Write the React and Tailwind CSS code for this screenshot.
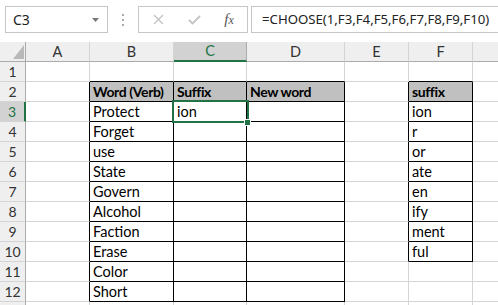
import React from "react";

const widths = [64, 84, 73, 98, 64, 64, 60];
const letters = ["A", "B", "C", "D", "E", "F", "G"];

const data = {
  "1-2": "Word (Verb)",
  "2-2": "Suffix",
  "3-2": "New word",
  "5-2": "suffix",
  "1-3": "Protect",
  "1-4": "Forget",
  "1-5": "use",
  "1-6": "State",
  "1-7": "Govern",
  "1-8": "Alcohol",
  "1-9": "Faction",
  "1-10": "Erase",
  "1-11": "Color",
  "1-12": "Short",
  "2-3": "ion",
  "5-3": "ion",
  "5-4": "r",
  "5-5": "or",
  "5-6": "ate",
  "5-7": "en",
  "5-8": "ify",
  "5-9": "ment",
  "5-10": "ful",
};

function inRegion(c, r) {
  if (c >= 1 && c <= 3 && r >= 2 && r <= 12) return true;
  if (c === 5 && r >= 2 && r <= 10) return true;
  return false;
}

function Cell({ c, r }) {
  const rightBlack = inRegion(c, r) || inRegion(c + 1, r);
  const bottomBlack = inRegion(c, r) || inRegion(c, r + 1);
  const isHead = r === 2 && inRegion(c, r);
  const text = data[`${c}-${r}`];
  return (
    <div
      style={{ width: widths[c] }}
      className={`shrink-0 h-[20px] border-r border-b flex items-end pl-[3px] pb-[1px] overflow-hidden whitespace-nowrap leading-[17px] text-black ${
        rightBlack ? "border-r-black" : "border-r-[#d4d4d4]"
      } ${bottomBlack ? "border-b-black" : "border-b-[#d4d4d4]"} ${
        isHead
          ? "bg-[#c0c0c0] font-bold text-[14px] tracking-[-0.4px]"
          : "bg-white text-[14.5px]"
      }`}
    >
      {text}
    </div>
  );
}

function RowHeader({ r }) {
  const sel = r === 3;
  return (
    <div
      className={`shrink-0 w-[26px] h-[20px] border-b border-b-[#d4d4d4] flex items-center justify-center text-[14px] ${
        sel
          ? "bg-[#d2d2d2] text-[#217346] border-r-2 border-r-[#217346]"
          : "bg-[#efefef] text-[#333] border-r border-r-[#ababab]"
      }`}
    >
      {r <= 12 ? r : ""}
    </div>
  );
}

export default function App() {
  const rows = Array.from({ length: 13 }, (_, i) => i + 1);
  return (
    <div className="relative w-[498px] h-[305px] overflow-hidden bg-white font-['Lato',sans-serif]">
      {/* toolbar */}
      <div className="h-[42px] bg-white flex items-start pt-[6px] overflow-hidden">
        <div className="shrink-0 ml-[5px] w-[103px] h-[27px] border border-[#c6c6c6] bg-white flex items-center justify-between pl-[7px] pr-[8px] font-['Noto_Sans',sans-serif] text-[14px] text-[#222]">
          <span>C3</span>
          <svg width="7" height="4" viewBox="0 0 7 4">
            <path d="M0 0 L7 0 L3.5 4 Z" fill="#777" />
          </svg>
        </div>
        <div className="shrink-0 w-[30px] h-[27px] flex flex-col items-center justify-center gap-[3px]">
          <div className="w-[2px] h-[2px] bg-[#aaa]" />
          <div className="w-[2px] h-[2px] bg-[#aaa]" />
          <div className="w-[2px] h-[2px] bg-[#aaa]" />
        </div>
        <div className="shrink-0 w-[110px] h-[27px] border border-[#c6c6c6] bg-white flex items-center">
          <div className="w-[38px] flex justify-center">
            <svg width="11" height="11" viewBox="0 0 11 11">
              <path d="M1 1 L10 10 M10 1 L1 10" stroke="#c3c3c3" strokeWidth="1.4" />
            </svg>
          </div>
          <div className="w-[34px] flex justify-center">
            <svg width="13" height="10" viewBox="0 0 13 10">
              <path d="M1 5 L4.5 8.5 L12 1" stroke="#c3c3c3" strokeWidth="1.8" fill="none" />
            </svg>
          </div>
          <div className="w-[36px] flex justify-center font-['Liberation_Serif',serif] italic text-[15px] text-[#555]">
            <span>f</span>
            <span className="text-[12px] mt-[3px]">x</span>
          </div>
        </div>
        <div className="shrink-0 ml-[3px] w-[260px] h-[27px] border border-[#c6c6c6] bg-white flex items-center pl-[10px] font-['Noto_Sans',sans-serif] text-[13.2px] text-[#222] whitespace-nowrap">
          =CHOOSE(1,F3,F4,F5,F6,F7,F8,F9,F10)
        </div>
      </div>

      {/* column headers */}
      <div className="flex h-[20px]">
        <div className="relative shrink-0 w-[26px] h-[20px] bg-[#efefef] border-r border-r-[#ababab] border-b border-b-[#ababab]">
          <svg className="absolute right-[1px] bottom-[2px]" width="11" height="14" viewBox="0 0 11 14">
            <path d="M11 0 L11 14 L0 14 Z" fill="#b9b9b9" />
          </svg>
        </div>
        {letters.map((l, i) =>
          i === 2 ? (
            <div
              key={l}
              style={{ width: widths[i] }}
              className="shrink-0 h-[20px] bg-[#d2d2d2] border-r border-r-[#ababab] border-b-2 border-b-[#217346] flex items-center justify-center text-[14.5px] text-[#217346]"
            >
              {l}
            </div>
          ) : (
            <div
              key={l}
              style={{ width: widths[i] }}
              className="shrink-0 h-[20px] bg-[#efefef] border-r border-r-[#d4d4d4] border-b border-b-[#ababab] flex items-center justify-center text-[14.5px] text-[#333]"
            >
              {i < 6 ? l : ""}
            </div>
          )
        )}
      </div>

      {/* rows */}
      {rows.map((r) => (
        <div key={r} className="flex">
          <RowHeader r={r} />
          {widths.map((_, c) => (
            <Cell key={c} c={c} r={r} />
          ))}
        </div>
      ))}

      {/* selection */}
      <div className="absolute left-[172px] top-[100px] w-[77px] h-[23px] border-2 border-[#217346] pointer-events-none" />
      <div className="absolute left-[244px] top-[119px] w-[7px] h-[7px] bg-[#217346] border border-white pointer-events-none" />
    </div>
  );
}
